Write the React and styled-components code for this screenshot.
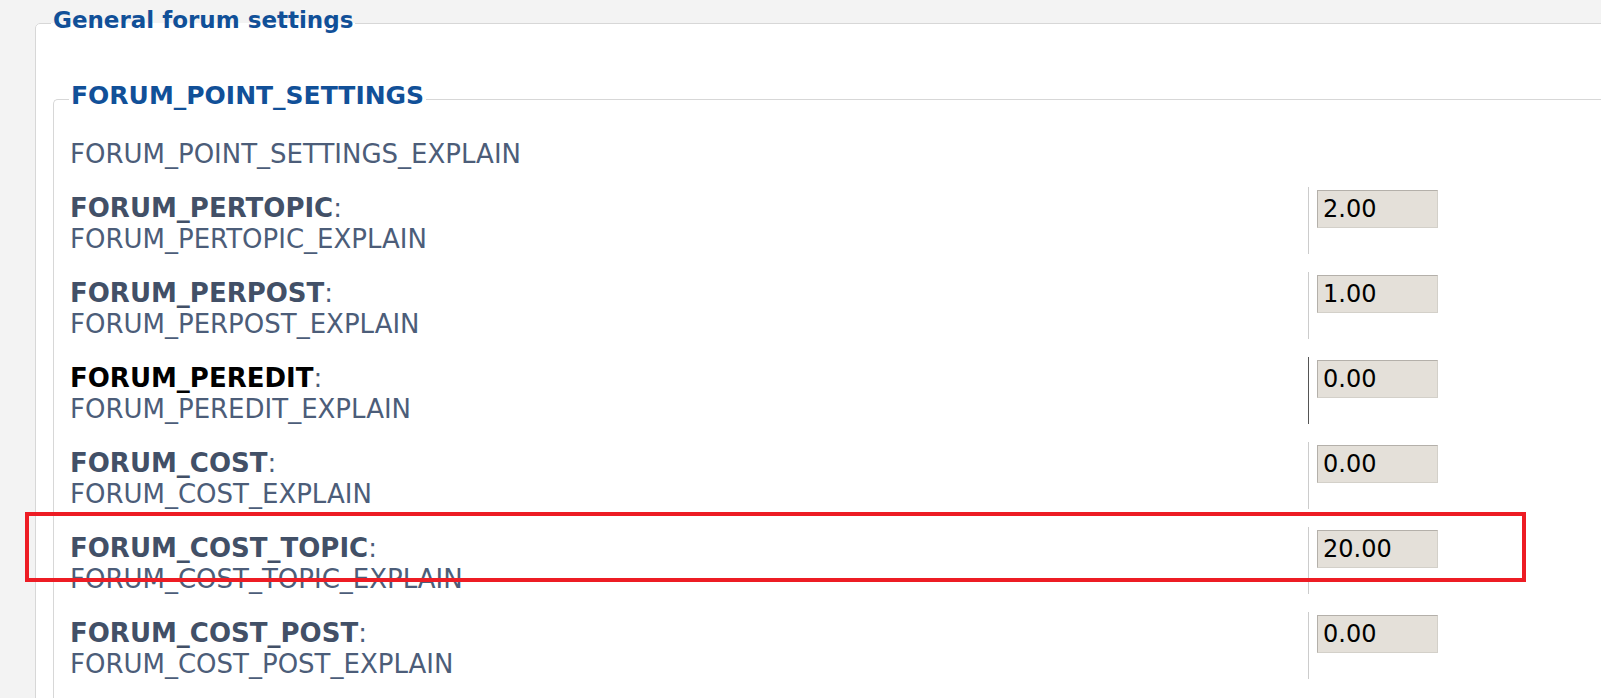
import React from 'react';
import styled, { createGlobalStyle } from 'styled-components';

const GlobalStyle = createGlobalStyle`
  html, body {
    margin: 0;
    padding: 0;
    background: #f3f3f3;
    font-family: "DejaVu Sans", Verdana, sans-serif;
  }
`;

const BLUE = '#115098';
const LABEL = '#425067';
const EXPLAIN = '#4c5d79';

const Page = styled.div`
  position: relative;
  padding: 0 0 0 35px;
  height: 698px;
  overflow: hidden;
`;

const Panel = styled.fieldset`
  margin: 0;
  margin-right: -40px;
  padding: 0 0 0 17px;
  border: 1px solid #d7d7d7;
  border-radius: 5px 0 0 0;
  background: #fff;
  min-height: 700px;
`;

const PanelTitle = styled.legend`
  margin-left: -2px;
  padding: 0 2px 6px;
  font-size: 23px;
  font-weight: bold;
  color: ${BLUE};
  line-height: 40px;
`;

const Group = styled.fieldset`
  margin: 33px 0 0 0;
  padding: 0 0 40px 16px;
  border: 1px solid #d7d7d7;
  border-radius: 5px 0 0 0;
  border-right: none;
`;

const GroupTitle = styled.legend`
  margin-left: -1px;
  padding: 0 2px 6px;
  font-size: 25px;
  font-weight: bold;
  color: ${BLUE};
  line-height: 34px;
`;

const GroupExplain = styled.p`
  margin: 20px 0 17px;
  font-size: 26px;
  line-height: 31px;
  color: ${EXPLAIN};
`;

const Row = styled.dl`
  display: flex;
  margin: 0 0 17px;
`;

const Term = styled.dt`
  width: 1238px;
  padding-top: 6px;
  font-size: 26px;
  line-height: 31px;
  color: ${EXPLAIN};
`;

const Label = styled.strong`
  color: ${p => (p.$active ? '#000' : LABEL)};
`;

const Explain = styled.span`
  display: block;
`;

const Value = styled.dd`
  margin: 0;
  height: 67px;
  padding: 3px 0 0 8px;
  box-sizing: border-box;
  border-left: 1px solid ${p => (p.$active ? '#555' : '#cccccc')};
`;

const NumberInput = styled.input`
  box-sizing: border-box;
  width: 121px;
  height: 38px;
  padding: 0 5px;
  border: 1px solid #b4b0aa;
  border-bottom-color: #d3d0c9;
  border-right-color: #d3d0c9;
  background: #e4e0d9;
  font-family: "DejaVu Sans", Verdana, sans-serif;
  font-size: 24px;
  color: #000;
  outline: none;
`;

const Highlight = styled.div`
  position: absolute;
  left: 25px;
  top: 512px;
  width: 1501px;
  height: 70px;
  box-sizing: border-box;
  border: 4px solid #ed1c24;
  pointer-events: none;
`;

const settings = [
  { key: 'FORUM_PERTOPIC', value: '2.00' },
  { key: 'FORUM_PERPOST', value: '1.00' },
  { key: 'FORUM_PEREDIT', value: '0.00', active: true },
  { key: 'FORUM_COST', value: '0.00' },
  { key: 'FORUM_COST_TOPIC', value: '20.00' },
  { key: 'FORUM_COST_POST', value: '0.00' },
];

export default function App() {
  return (
    <Page>
      <GlobalStyle />
      <Panel>
        <PanelTitle>General forum settings</PanelTitle>
        <Group>
          <GroupTitle>FORUM_POINT_SETTINGS</GroupTitle>
          <GroupExplain>FORUM_POINT_SETTINGS_EXPLAIN</GroupExplain>
          {settings.map(s => (
            <Row key={s.key}>
              <Term>
                <Label $active={s.active}>{s.key}</Label>:
                <Explain>{s.key}_EXPLAIN</Explain>
              </Term>
              <Value $active={s.active}>
                <NumberInput type="text" defaultValue={s.value} readOnly />
              </Value>
            </Row>
          ))}
        </Group>
      </Panel>
      <Highlight />
    </Page>
  );
}
